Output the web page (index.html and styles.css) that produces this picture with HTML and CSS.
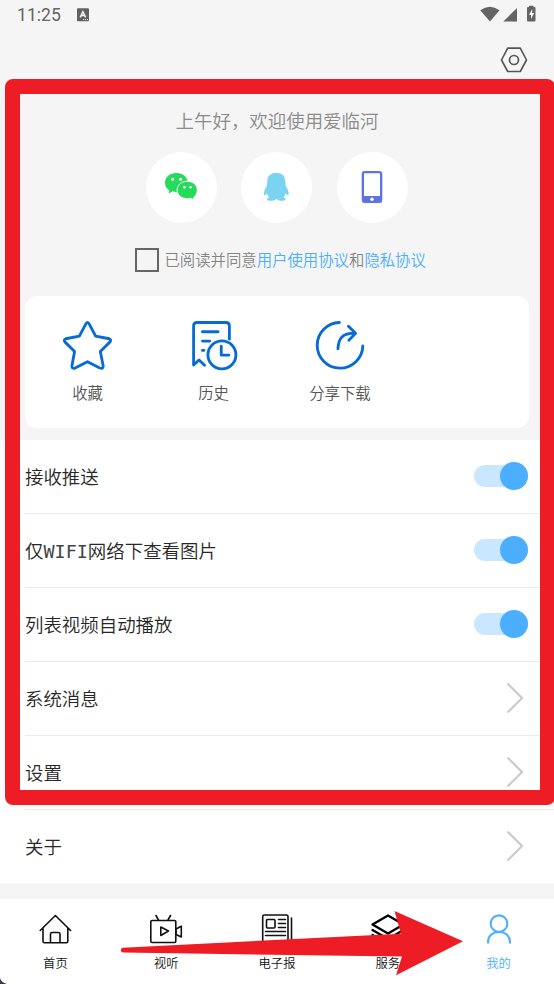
FILE: index.html
```html
<!DOCTYPE html>
<html lang="zh-CN">
<head>
<meta charset="utf-8">
<title>我的</title>
<link rel="stylesheet" href="styles.css">
</head>
<body>
<div class="screen">
  <header class="status">
    <span class="clock">11:25</span>
    <svg class="badge" width="12" height="14" viewBox="0 0 12 14"><rect y=".3" width="12" height="13" rx="1" fill="#626262"/><path d="M3.2 9.3 5.9 3.7 8.6 9.3M4.2 7.6h3.4" fill="none" stroke="#f5f5f5" stroke-width="1.5"/><path d="M6 11.5h1M8 11.5h1M10 11.5h1" stroke="#f5f5f5"/></svg>
    <svg class="signals" width="56" height="18" viewBox="0 0 56 18" fill="#646464"><path d="M.3 5.200Q9.900 -1.900 19.500 5.200L10 16.500Z"/><path d="M23.300 16.500 37 3V16.500Z"/><path d="M49 2V.7h4.500V2H54.500q1 0 1 1V15.500q0 1-1 1h-6.500q-1 0-1-1V3q0-1 1-1Z"/><path d="m52.200 4-3.200 6h2v4l3.200-6h-2Z" fill="#f5f5f5"/></svg>
  </header>
  <div class="toolbar">
    <svg width="28" height="26" viewBox="0 0 28 26" fill="none" stroke="#555"><path d="M7.700 1.100h12.600L26.500 13l-6.200 11.500H7.700L1.500 13Z" stroke-width="1.600" stroke-linejoin="round"/><circle cx="14" cy="13" r="4.500" stroke-width="1.700"/></svg>
  </div>
  <section class="welcome">
    <h1>上午好，欢迎使用爱临河</h1>
    <div class="logins">
      <button aria-label="微信"><svg width="34" height="30" viewBox="0 0 34 30"><path d="M12.300 1C5.900 1 1 5.100 1 10.700c0 3.200 1.500 5.800 4 7.500l-.2 3.200 3.700-2.100c1.200.4 2.400.6 3.800.6 6.400 0 11.400-4.100 11.400-9.500S18.700 1 12.300 1Z" fill="#24db5a"/><path d="M23.300 9.200c-5.800 0-10.200 3.800-10.200 8.800s4.400 8.700 10.200 8.700c1.300 0 2.500-.2 3.500-.5l3.400 1.800-.4-2.900c2.200-1.600 3.500-4.200 3.500-7.100 0-5-4.300-8.800-10-8.800Z" fill="#24db5a" stroke="#fff" stroke-width="1"/><g fill="#fff"><circle cx="8.600" cy="7.300" r="1.500"/><circle cx="16.500" cy="7.300" r="1.500"/><circle cx="20.400" cy="15.200" r="1.250"/><circle cx="26.600" cy="15.200" r="1.250"/></g></svg></button>
      <button aria-label="QQ"><svg width="26" height="30" viewBox="-.3 0 26 30"><path fill="#7ad4f1" d="M13 .8c-5.900 0-9 3.900-9 8.500 0 3.300-.4 4.900-1.700 7C.7 18.900.2 21.900 1 23c.8.7 2-.5 2.600-1.700.4 1.600 1.100 3 2.200 4.100-1.700.6-2.500 1.500-1.900 2.400.5.900 2.600 1.200 4.800.9 2-.2 3.500-.9 4.300-1.700.8.8 2.300 1.500 4.300 1.700 2.200.3 4.300 0 4.800-.9.600-.9-.2-1.800-1.900-2.400 1.100-1.100 1.800-2.500 2.200-4.100.6 1.200 1.800 2.400 2.600 1.700.8-1.100.3-4.100-1.300-6.700-1.300-2.100-1.700-3.700-1.700-7C22 4.700 18.900.8 13 .8Z"/></svg></button>
      <button aria-label="手机"><svg width="22" height="34" viewBox="0 0 22 34"><rect x=".7" y="1" width="20.600" height="32" rx="3" fill="#5b74e5"/><rect x="3" y="3.200" width="16" height="22.800" rx=".5" fill="#fff"/><circle cx="11" cy="29.200" r="1.700" fill="#fff"/></svg></button>
    </div>
    <div class="agreement"><i class="checkbox"></i><span>已阅读并同意<b>用户使用协议</b>和<b>隐私协议</b></span></div>
    <div class="card">
      <div class="action"><svg viewBox="0 0 50 50"><path d="M23.600 2.500Q25 .5 26.400 2.500L33.300 15.500 47.200 18.100Q49.500 19 48 21.300L38.100 31.200 41 46Q41 49.300 37.500 48L25 41.500 12.400 48Q9 49.200 9.100 46L11.800 31.200 1.900 21.300Q.5 19 2.800 18.100L16.700 15.500Z"/></svg><span>收藏</span></div>
      <div class="action"><svg viewBox="-1.200 0 50 50"><path d="M14.700 45.200 9 39.700 3.500 45V5Q3.500 1.500 7 1.500H36.500Q40 1.500 40 5V18.500M12.500 11H28.500M12.500 20.500H20M12.500 30H14"/><circle cx="32.400" cy="34.500" r="14.300"/><path d="M31.700 25.700V34.800H39.500"/></svg><span>历史</span></div>
      <div class="action"><svg viewBox=".8 0 50 50"><path d="M24.600 1.500A23.300 23.300 0 1 0 48.600 25.400M23.200 28.300C23.600 18 27.200 12.400 40.500 12.400M33.900 5.300 41.200 12.400 34.300 19.600"/></svg><span>分享下载</span></div>
    </div>
  </section>
  <main class="settings">
    <div class="row"><span>接收推送</span><i class="switch"></i></div>
    <div class="row"><span>仅<code>WIFI</code>网络下查看图片</span><i class="switch"></i></div>
    <div class="row"><span>列表视频自动播放</span><i class="switch"></i></div>
    <div class="row"><span>系统消息</span><svg class="chevron" viewBox="0 0 18 32"><path d="m1.500 1.500 14.600 14.600L1.500 30.500"/></svg></div>
    <div class="row"><span>设置</span><svg class="chevron" viewBox="0 0 18 32"><path d="m1.500 1.500 14.600 14.600L1.500 30.500"/></svg></div>
    <div class="row"><span>关于</span><svg class="chevron" viewBox="0 0 18 32"><path d="m1.500 1.500 14.600 14.600L1.500 30.500"/></svg></div>
  </main>
  <nav class="tabs">
    <a><svg viewBox="0 0 34 34"><path d="M2.200 17.500 17.400 2.500 32.600 17.500M5 15V28.200Q5 29.700 6.500 29.700H28.300Q29.800 29.700 29.800 28.200V15M12.500 29.500V21Q12.500 19.500 14 19.500H20.500Q22 19.500 22 21V29.500"/></svg><span>首页</span></a>
    <a><svg viewBox="0 0 34 34"><rect x="1.800" y="7.500" width="25" height="22" rx="1.200"/><path d="m7 2.500 2.500 4.500M21.500 2.500 19 7M11.800 14v8.500L19.500 18ZM27 16l5.300-2.800V24L27 21.500Z"/></svg><span>视听</span></a>
    <a><svg viewBox="0 0 34 34"><path d="M2.700 30V3.500Q2.700 2 4.200 2H26.500Q28 2 28 3.500V30ZM31.500 5V30M5.500 18.500H25.500M5.500 22.500H25.500M18.500 6.500H25.500M18.500 10.500H25.500M18.500 14.500H25.500"/><rect x="6.500" y="6.500" width="8.500" height="8.500" rx="1"/></svg><span>电子报</span></a>
    <a class="service"><svg viewBox="0 0 34 34"><path d="M1.500 11.500 17 2.500 32.500 11.500 17 20.500ZM1.500 17 17 26 32.500 17M1.500 22 17 31 32.500 22"/></svg><span>服务</span></a>
    <a class="active"><svg viewBox="0 0 34 34"><circle cx="17" cy="10.700" r="8.300"/><path d="M6.100 30.500V28.500C6.100 22.500 11 18.900 17 18.900S27.900 22.500 27.900 28.500V30.500"/></svg><span>我的</span></a>
  </nav>
  <div class="highlight"></div>
  <svg class="pointer" width="344" height="68" viewBox="0 0 344 68"><path fill="#ee1c25" d="M3 37.700 281 23.700 274.500 1 343 31.300 276 65.200 282 46.500 3 42.500Q.8 42 .8 40T3 37.700Z"/></svg>
  <svg class="corner" width="7" height="6" viewBox="0 0 7 6"><path d="M0 0Q1 4.500 7 6H0Z" fill="#3c3942"/></svg>
</div>
</body>
</html>
```

FILE: styles.css
```css
* { box-sizing: border-box; }
body { margin: 0; }
.screen {
  position: relative;
  width: 554px;
  height: 984px;
  overflow: hidden;
  background: #f5f5f5;
  color: #272727;
  font-family: "Noto Sans CJK SC", sans-serif;
  font-weight: 350;
}
svg { display: block; flex: none; }

.status {
  display: flex;
  align-items: center;
  height: 30px;
  padding: 0 18px 0 17px;
}
.clock { width: 60px; color: #646464; font: 400 17.6px/31px Roboto, sans-serif; }
.signals { margin: -3px 0 0 auto; }
.toolbar { display: flex; justify-content: flex-end; height: 49px; padding: 17px 26px 0 0; }

.welcome { height: 361px; padding: 24px 25px 0; }
.welcome h1 {
  margin: 0;
  color: #8b8b8b;
  font-size: 18.45px;
  font-weight: 350;
  line-height: 34px;
  text-align: center;
}
.logins { display: flex; justify-content: center; gap: 24.5px; margin: 15px 1px 0 0; }
.logins button {
  display: flex;
  align-items: center;
  justify-content: center;
  width: 71px;
  height: 71px;
  padding: 0 1px 1px 0;
  border: 0;
  border-radius: 50%;
  background: #fff;
}
.agreement {
  display: flex;
  align-items: center;
  height: 24px;
  margin: 25px 0 24px 110px;
  gap: 5.5px;
  color: #858585;
  font-size: 15.38px;
  white-space: nowrap;
}
.agreement span { padding-bottom: 2px; }
.agreement b { color: #4baeff; font-weight: 350; }
.checkbox { width: 24px; height: 24px; border: 2px solid #666; }
.card {
  display: flex;
  height: 132px;
  border-radius: 12px;
  background: #fff;
}
.action {
  display: flex;
  flex-direction: column;
  align-items: center;
  width: 126px;
  padding: 25px 1px 0 0;
  color: #555;
  font-size: 15.38px;
  line-height: 24px;
}
.action:last-child { padding-right: 0; }
.action svg { width: 49px; height: 49px; margin-bottom: 10px; overflow: visible; fill: none; stroke: #066bd2; stroke-width: 2.9; stroke-linejoin: round; stroke-linecap: round; }

.settings { height: 443px; padding-left: 25px; background: #fff; }
.row {
  display: flex;
  align-items: center;
  justify-content: space-between;
  height: 74px;
  padding: 0 26px 2px 0;
  border-bottom: 1px solid #ebebeb;
  font-size: 18.45px;
}
.row:last-child { height: 73px; border-bottom: 0; }
.row span { line-height: 28px; }
.row code { color: #444; font: 400 18.45px/1 "DejaVu Sans Mono", monospace; }
.switch { display: flex; align-items: center; justify-content: flex-end; width: 54px; height: 22px; border-radius: 11px; background: #c9e7ff; }
.switch::after { content: ""; flex: none; width: 28px; height: 28px; border-radius: 50%; background: #4baeff; }
.chevron { width: 18px; height: 32px; margin-right: 4px; fill: none; stroke: #cbcbcb; stroke-width: 2.2; }

.tabs { display: flex; height: 85px; margin-top: 16px; background: #fff; }
.tabs a {
  display: flex;
  flex: 1;
  flex-direction: column;
  align-items: center;
  padding-top: 14px;
  color: #111;
  font-size: 12.3px;
  line-height: 18px;
}
.tabs svg { width: 34px; height: 34px; margin-bottom: 7px; fill: none; stroke: #111; stroke-width: 1.6; stroke-linejoin: round; stroke-linecap: round; }
.tabs .service svg { stroke-width: 2.3; stroke: #000; }
.tabs .active { color: #4baeff; }
.tabs .active svg { stroke: #4baeff; stroke-width: 2.1; stroke-linecap: butt; }

.highlight { position: absolute; left: 5px; top: 79px; width: 550px; height: 726px; border: 15px solid #ee1c25; border-radius: 8px; }
.pointer { position: absolute; left: 120px; top: 910px; }
.corner { position: absolute; left: 0; bottom: 0; }
```
